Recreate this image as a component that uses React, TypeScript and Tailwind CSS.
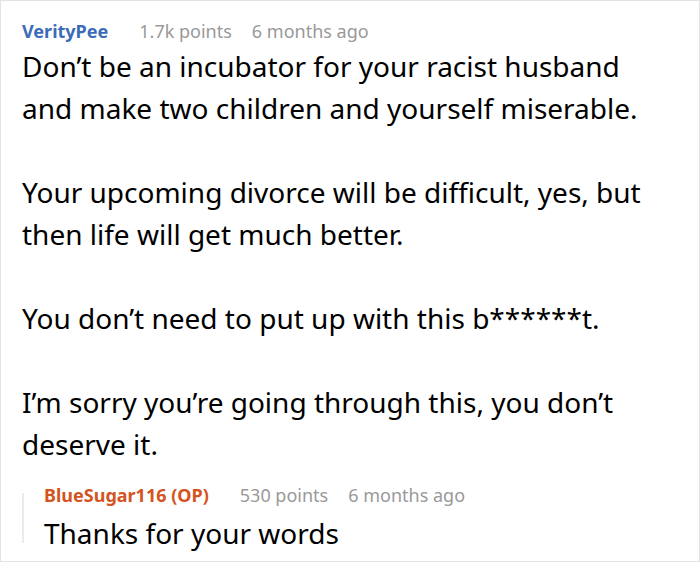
import React from "react";

type Meta = { name: string; points: string; time: string; op?: boolean };

const CommentHeader: React.FC<Meta> = ({ name, points, time, op }) => (
  <div className="flex items-baseline text-[18px] leading-[24px]">
    <span className={op ? "font-bold text-[#d4541f]" : "font-bold text-[#3b6cb7]"}>{name}</span>
    <span className="ml-[31px] text-[#999999]">{points}</span>
    <span className="ml-[20px] text-[#999999]">{time}</span>
  </div>
);

const paragraphs = [
  "Don’t be an incubator for your racist husband and make two children and yourself miserable.",
  "Your upcoming divorce will be difficult, yes, but then life will get much better.",
  "You don’t need to put up with this b******t.",
  "I’m sorry you’re going through this, you don’t deserve it.",
];

export default function App() {
  return (
    <div
      className="w-[700px] h-[562px] bg-white border border-[#e3e3e3] overflow-hidden text-black"
      style={{ fontFamily: '"Noto Sans", "Open Sans", sans-serif' }}
    >
      <div className="pl-[21px] pr-4 pt-[18px]">
        <CommentHeader name="VerityPee" points="1.7k points" time="6 months ago" />
        <div className="mt-[2px] flex flex-col gap-[42px] text-[28px] leading-[42px] w-[630px]">
          {paragraphs.map((p, i) => (
            <p key={i}>{p}</p>
          ))}
        </div>
        <div className="mt-[18px] flex">
          <div className="w-[2px] h-[50px] mt-[10px] bg-[#ebebeb]" />
          <div className="pl-[20px]">
            <CommentHeader name="BlueSugar116 (OP)" points="530 points" time="6 months ago" op />
            <div className="mt-[5px] text-[28px] leading-[42px]">Thanks for your words</div>
          </div>
        </div>
      </div>
    </div>
  );
}
